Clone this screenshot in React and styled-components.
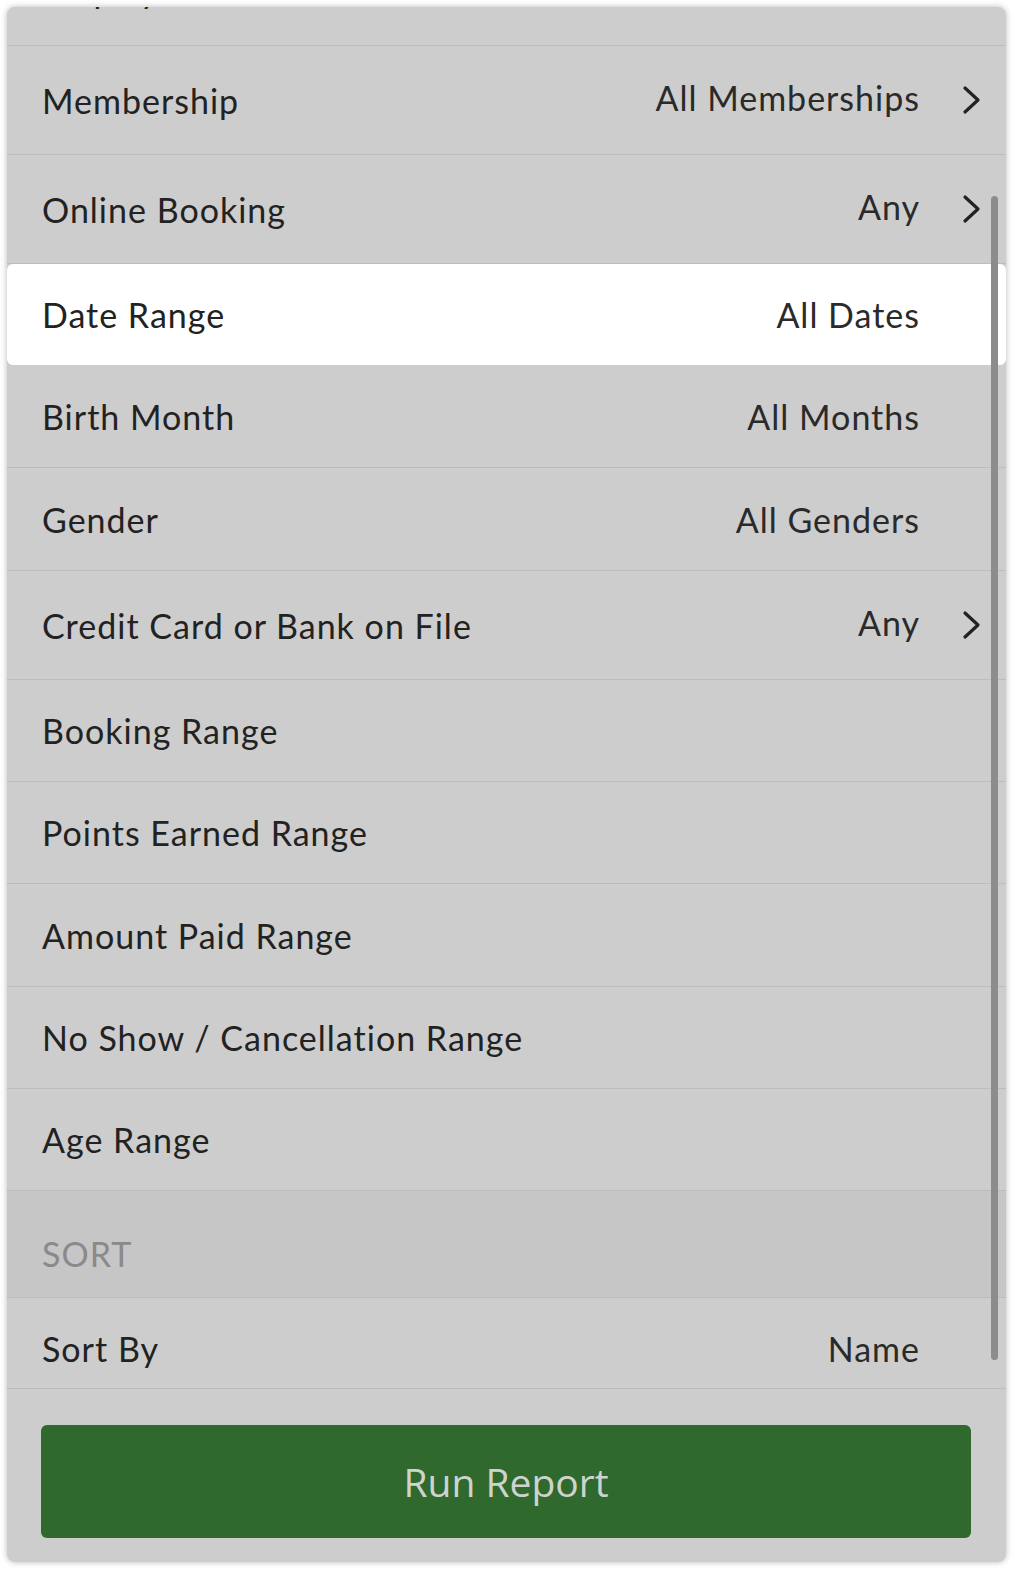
import React from "react";
import styled, { createGlobalStyle } from "styled-components";

const GlobalStyle = createGlobalStyle`
    html, body {
        margin: 0;
        padding: 0;
        background: #ffffff;
    }
    body {
        font-family: Lato, "Open Sans", sans-serif;
        -webkit-font-smoothing: antialiased;
    }
`;

const Sheet = styled.div`
    position: relative;
    margin: 7px 9px 8px 7px;
    height: 1555px;
    border-radius: 8px;
    background: #cdcdcd;
    box-shadow: 0 0 6px rgba(0, 0, 0, 0.28);
    overflow: hidden;
    display: flex;
    flex-direction: column;
`;

const List = styled.div`
    display: flex;
    flex-direction: column;
`;

const Row = styled.div`
    display: flex;
    align-items: center;
    box-sizing: border-box;
    height: ${props => props.height}px;
    padding: ${props => props.offset || 0}px 24px 0 35px;
    background: ${props => props.active ? "#ffffff" : "transparent"};
    border-radius: ${props => props.active ? "6px" : "0"};
    border-bottom: 1px solid ${props => props.active ? "transparent" : "#bcbcbc"};
    overflow: hidden;
`;

const ClippedRow = styled(Row)`
    align-items: flex-start;
`;

const Label = styled.span`
    flex: 1;
    font-size: 34px;
    color: #222222;
    letter-spacing: 1px;
`;

// the row scrolled mostly out of view: only the descenders peek in
const ClippedLabel = styled(Label)`
    margin-top: -38px;
`;

const Value = styled.span`
    font-size: 34px;
    color: #2a2a2a;
    margin-top: ${props => props.raised ? "-6px" : "0"};
    letter-spacing: 1px;
`;

const ChevronSlot = styled.span`
    width: 62px;
    display: flex;
    justify-content: flex-end;
    align-items: center;
`;

const SectionHeader = styled.div`
    display: flex;
    align-items: center;
    height: 107px;
    padding: 18px 35px 0;
    box-sizing: border-box;
    background: #c6c6c6;
    border-bottom: 1px solid #bcbcbc;
    font-size: 34px;
    color: #8a8a8a;
    letter-spacing: 1px;
`;

const Footer = styled.div`
    padding: 36px 35px 27px 34px;
`;

const RunButton = styled.button`
    width: 100%;
    height: 113px;
    border: none;
    border-radius: 6px;
    background: #30692e;
    color: #cfd3cd;
    font-family: "Open Sans", sans-serif;
    font-size: 39px;
    letter-spacing: 0;
    cursor: pointer;
`;

const Scrollbar = styled.div`
    position: absolute;
    right: 8px;
    top: 189px;
    width: 7px;
    height: 1164px;
    border-radius: 4px;
    background: #8c8c8c;
`;

const Chevron = () => (
    <svg width="20" height="32" viewBox="0 0 20 32">
        <path d="M3 4 L16 16 L3 28" fill="none" stroke="#222" strokeWidth="3.2" strokeLinecap="round" strokeLinejoin="round" />
    </svg>
);

const filters = [
    { label: "Membership", value: "All Memberships", chevron: true, height: 109 },
    { label: "Online Booking", value: "Any", chevron: true, height: 109 },
    { label: "Date Range", value: "All Dates", active: true, height: 101 },
    { label: "Birth Month", value: "All Months", height: 103 },
    { label: "Gender", value: "All Genders", height: 103 },
    { label: "Credit Card or Bank on File", value: "Any", chevron: true, height: 109 },
    { label: "Booking Range", height: 102 },
    { label: "Points Earned Range", height: 102 },
    { label: "Amount Paid Range", height: 103 },
    { label: "No Show / Cancellation Range", height: 102 },
    { label: "Age Range", height: 102 },
];

const FilterRow = ({ item }) => (
    <Row height={item.height} active={item.active}>
        <Label>{item.label}</Label>
        {item.value && <Value raised={item.chevron}>{item.value}</Value>}
        <ChevronSlot>{item.chevron && <Chevron />}</ChevronSlot>
    </Row>
);

const App = () => (
    <>
        <GlobalStyle />
        <Sheet>
            <List>
                <ClippedRow height={39}>
                    <ClippedLabel>Display</ClippedLabel>
                </ClippedRow>
                {filters.map(item => <FilterRow key={item.label} item={item} />)}
                <SectionHeader>SORT</SectionHeader>
                <Row height={91} offset={10}>
                    <Label>Sort By</Label>
                    <Value>Name</Value>
                    <ChevronSlot />
                </Row>
            </List>
            <Footer>
                <RunButton>Run Report</RunButton>
            </Footer>
            <Scrollbar />
        </Sheet>
    </>
);

export default App;
